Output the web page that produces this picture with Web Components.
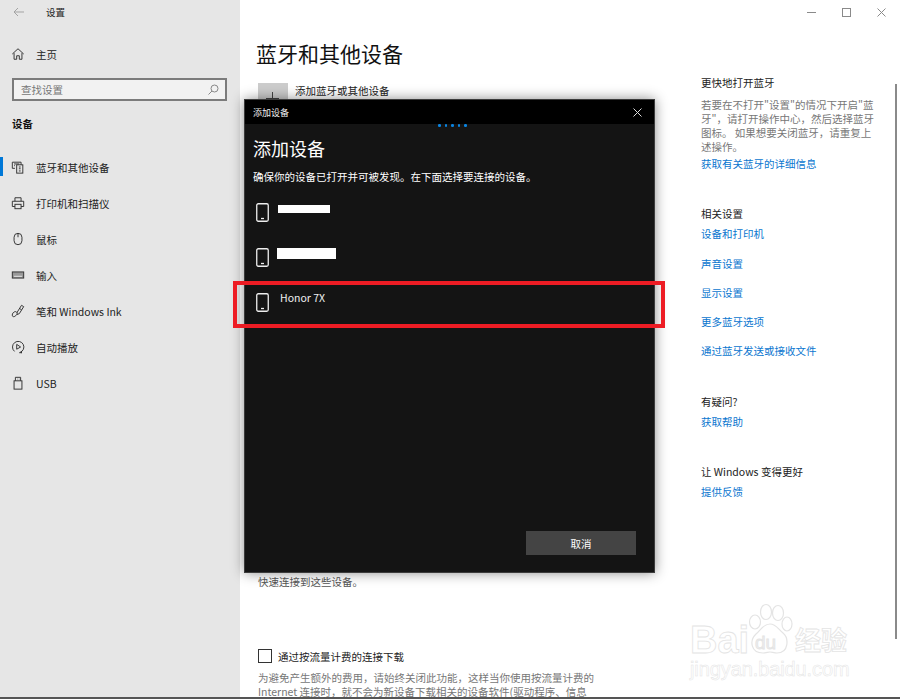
<!DOCTYPE html>
<html lang="zh-CN">
<head>
  <meta charset="UTF-8">
  <title>设置</title>
  <style>
    html, body { margin: 0; height: 100%; background: #fff; }
    body { font: 10.5px "Noto Sans CJK SC", "Liberation Sans", sans-serif; color: #1a1a1a; }
    svg { display: block; }
  </style>
</head>
<body>
  <settings-window>
    <settings-sidebar slot="sidebar">
      <nav-item svg="home" slot="home">主页</nav-item>
      <nav-item svg="bluetooth" active>蓝牙和其他设备</nav-item>
      <nav-item svg="printer">打印机和扫描仪</nav-item>
      <nav-item svg="mouse">鼠标</nav-item>
      <nav-item svg="keyboard">输入</nav-item>
      <nav-item svg="pen">笔和 Windows Ink</nav-item>
      <nav-item svg="play">自动播放</nav-item>
      <nav-item svg="usb">USB</nav-item>
    </settings-sidebar>

    <settings-main slot="main"></settings-main>

    <settings-aside slot="aside">
      <aside-group heading="更快地打开蓝牙" style="--gap:7px">
        <p-text>若要在不打开"设置"的情况下开启"蓝<br>牙"，请打开操作中心，然后选择蓝牙<br>图标。 如果想要关闭蓝牙，请重复上<br>述操作。</p-text>
        <a-link style="margin-top:2px">获取有关蓝牙的详细信息</a-link>
      </aside-group>
      <aside-group heading="相关设置" style="margin-top:21px">
        <a-link>设备和打印机</a-link>
        <a-link>声音设置</a-link>
        <a-link>显示设置</a-link>
        <a-link>更多蓝牙选项</a-link>
        <a-link>通过蓝牙发送或接收文件</a-link>
      </aside-group>
      <aside-group heading="有疑问?" style="margin-top:21px">
        <a-link>获取帮助</a-link>
      </aside-group>
      <aside-group heading="让 Windows 变得更好" style="margin-top:21px">
        <a-link>提供反馈</a-link>
      </aside-group>
    </settings-aside>

    <add-device-dialog slot="overlay">
      <device-row><span class="bar" slot="bar" style="--w:52px;--h:8px;--x:-2px;--y:4px"></span></device-row>
      <device-row><span class="bar" slot="bar" style="--w:59px;--h:11px;--x:-3px;--y:2px"></span></device-row>
      <device-row>Honor 7X</device-row>
    </add-device-dialog>
    <red-mark slot="overlay"></red-mark>
    <baidu-mark slot="overlay"></baidu-mark>
  </settings-window>

  <script>
    const ICONS = {
      home: '<path d="M1.5 8 8 2l6.5 6M3.5 7v7h3v-4h3v4h3V7" />',
      bluetooth: '<path d="M1.5 2.5h10v3M1.5 2.5v7h3M3.5 4.5h6M3.5 6.5h1" /><rect x="6.5" y="5.5" width="7" height="9.5" /><path d="M9 8h2M9 10h2M9 12.5h2" />',
      printer: '<path d="M4.5 6V2h7v4M4.5 12h-3V6h13v6h-3" /><rect x="4.5" y="9.5" width="7" height="5" />',
      mouse: '<rect x="3.5" y="1.5" width="9" height="13" rx="4.5" /><path d="M8 1.5V6" />',
      keyboard: '<rect x="1.5" y="4.5" width="13" height="7" fill="#999" /><path d="M3.5 9.5h9" stroke="#e6e6e6" />',
      pen: '<path d="M7 9.5 12 1.5 14.5 3l-5 8-2.500 1z" /><path d="M9.500 5 12 6.500" /><path d="M7 10c-1-2-3-1.500-4.500 0S1 14.500 3 14.500s3-2 4-3" />',
      play: '<path d="M4 13A6.500 6.500 0 1 1 10 14.300" /><path d="M6.500 5v5.500L11 8zM9.500 14.500h3M12 12.500V15" />',
      usb: '<rect x="3.500" y="5.500" width="9" height="9.500" /><path d="M5 5.500v-4h6v4M7 3.500h.5M9 3.500h.5" />'
    }

    // small helper, every element just gets an open shadow root from a string
    function shadow(el, html) {
      el.attachShadow({ mode: 'open' }).innerHTML = html
    }

    customElements.define('settings-window', class extends HTMLElement {
      constructor() {
        super()
        shadow(this, `
          <style>
            :host { display: block; position: relative; width: 900px; height: 699px; overflow: hidden; background: #fff; }
            #frame { display: flex; height: 697px; border-bottom: 2px solid #555; overflow: hidden; }
          </style>
          <div id="frame">
            <slot name="sidebar"></slot>
            <slot name="main"></slot>
            <slot name="aside"></slot>
          </div>
          <slot name="overlay"></slot>
        `)
      }
    })

    customElements.define('settings-sidebar', class extends HTMLElement {
      constructor() {
        super()
        shadow(this, `
          <style>
            :host { display: block; flex: none; box-sizing: border-box; width: 240px; background: #e6e6e6; color: #222; }
            #top { display: flex; align-items: center; height: 24px; padding-left: 13px; }
            #top span { margin-left: 22px; font-size: 9.5px; }
            #home { display: block; margin-top: 12px; }
            #search { display: flex; align-items: center; justify-content: space-between; box-sizing: border-box; height: 23px; margin: 6px 13px 0 12px; padding: 0 6px 0 7px; border: 2px solid #7b7b7b; background: #f2f2f2; color: #777; }
            h4 { margin: 11px 0 0 12px; height: 24px; line-height: 24px; font-size: 10.5px; font-weight: 700; color: #111; }
            #list { margin-top: 13px; }
          </style>
          <div id="top">
            <svg width="11" height="10" viewBox="0 0 11 10" fill="none" stroke="#a3a3a3"><path d="M11 5H1M5 1 1 5l4 4" /></svg>
            <span>设置</span>
          </div>
          <div id="home"><slot name="home"></slot></div>
          <div id="search">
            <span>查找设置</span>
            <svg width="11" height="11" viewBox="0 0 11 11" fill="none" stroke="#888"><circle cx="6.5" cy="4.5" r="3.500" /><path d="M4 7 .5 10.500" /></svg>
          </div>
          <h4>设备</h4>
          <div id="list"><slot></slot></div>
        `)
      }
    })

    customElements.define('nav-item', class extends HTMLElement {
      constructor() {
        super()
        shadow(this, `
          <style>
            :host { display: flex; align-items: center; position: relative; height: 36px; padding-left: 11px; }
            svg { display: block; width: 14px; height: 14px; margin-right: 11px; fill: none; stroke: #333; stroke-width: 1.1; }
            #mark { display: none; position: absolute; left: 0; top: 8px; width: 3px; height: 19px; background: #0078d7; }
            :host([active]) #mark { display: block; }
          </style>
          <i id="mark"></i>
          <svg viewBox="0 0 16 16">${ICONS[this.getAttribute('svg')]}</svg>
          <slot></slot>
        `)
      }
    })

    customElements.define('settings-main', class extends HTMLElement {
      constructor() {
        super()
        shadow(this, `
          <style>
            :host { display: block; flex: none; box-sizing: border-box; width: 461px; padding-left: 18px; }
            h1 { margin: 35px 0 0 -2px; height: 36px; line-height: 36px; font-size: 21px; font-weight: 400; color: #111; }
            #add { display: flex; gap: 7px; margin-top: 12px; height: 30px; }
            #plus { display: block; width: 30px; height: 30px; background: #ccc; }
            #add span { line-height: 15px; color: #222; }
            #note { margin-top: 461px; line-height: 16px; color: #555; }
            #check { display: flex; align-items: center; gap: 6px; margin-top: 59px; height: 14px; color: #222; }
            #box { box-sizing: border-box; width: 14px; height: 14px; border: 1.5px solid #333; }
            #more { margin-top: 8px; width: 345px; line-height: 14px; color: #777; }
          </style>
          <h1>蓝牙和其他设备</h1>
          <div id="add">
            <svg id="plus" viewBox="0 0 30 30" fill="none" stroke="#444"><path d="M14.500 9v13M8 15.500h13" /></svg>
            <span>添加蓝牙或其他设备</span>
          </div>
          <div id="note">快速连接到这些设备。</div>
          <div id="check"><div id="box"></div>通过按流量计费的连接下载</div>
          <div id="more">为避免产生额外的费用，请始终关闭此功能，这样当你使用按流量计费的 Internet 连接时，就不会为新设备下载相关的设备软件(驱动程序、信息</div>
        `)
      }
    })

    customElements.define('settings-aside', class extends HTMLElement {
      constructor() {
        super()
        shadow(this, `
          <style>
            :host { display: block; flex: 1; position: relative; }
            #controls { display: flex; justify-content: flex-end; align-items: center; gap: 26px; height: 24px; padding-right: 14px; }
            #controls svg { fill: none; stroke: #8a8a8a; }
            #body { width: 180px; margin-top: 51px; }
            #bar { position: absolute; right: 3px; top: 84px; width: 2px; height: 555px; background: #8a8a8a; }
          </style>
          <div id="controls">
            <svg width="9" height="9" viewBox="0 0 9 9"><path d="M0 4.5h9" /></svg>
            <svg width="9" height="9" viewBox="0 0 9 9"><rect x=".5" y=".5" width="8" height="8" /></svg>
            <svg width="9" height="9" viewBox="0 0 9 9"><path d="M.5 .5l8 8M8.500 .5l-8 8" /></svg>
          </div>
          <div id="body"><slot></slot></div>
          <i id="bar"></i>
        `)
      }
    })

    customElements.define('aside-group', class extends HTMLElement {
      constructor() {
        super()
        shadow(this, `
          <style>
            :host { display: block; }
            h5 { margin: 0 0 var(--gap, 4px); height: 16px; line-height: 16px; font-size: 10.5px; font-weight: 400; color: #222; }
          </style>
          <h5>${this.getAttribute('heading')}</h5>
          <slot></slot>
        `)
      }
    })

    customElements.define('p-text', class extends HTMLElement {
      constructor() {
        super()
        shadow(this, `
          <style>:host { display: block; line-height: 14px; color: #777; white-space: nowrap; }</style>
          <slot></slot>
        `)
      }
    })

    customElements.define('a-link', class extends HTMLElement {
      constructor() {
        super()
        shadow(this, `
          <style>:host { display: block; height: 29.3px; line-height: 16px; color: #0a76cf; }</style>
          <slot></slot>
        `)
      }
    })

    customElements.define('add-device-dialog', class extends HTMLElement {
      constructor() {
        super()
        shadow(this, `
          <style>
            :host { display: flex; flex-direction: column; position: absolute; left: 244px; top: 99px; box-sizing: border-box; width: 411px; height: 474px; background: #141414; color: #f2f2f2; box-shadow: 0 0 12px rgba(0, 0, 0, .45); border: 1px solid #3c3c3c; }
            #title { display: flex; align-items: center; justify-content: space-between; flex: none; height: 24px; padding: 0 12px 0 8px; background: #000; font-size: 9px; }
            #title svg { fill: none; stroke: #ddd; }
            #dots { display: flex; justify-content: center; gap: 4px; height: 3px; padding-left: 6px; }
            #dots i { width: 2.5px; height: 2.5px; border-radius: 50%; background: #0a84e0; }
            h2 { margin: 8px 0 0 8px; height: 27px; line-height: 27px; font-size: 18px; font-weight: 400; color: #fff; }
            p { margin: 7px 0 18px 8px; line-height: 16px; color: #fff; }
            #foot { margin-top: auto; display: flex; justify-content: flex-end; padding: 0 18px 17px 0; }
            button { width: 110px; height: 24px; border: 0; padding: 0; background: #444; color: #fff; font: inherit; }
          </style>
          <div id="title">添加设备
            <svg width="9" height="9" viewBox="0 0 9 9"><path d="M.5 .5l8 8M8.500 .5l-8 8" /></svg>
          </div>
          <div id="dots"><i></i><i></i><i></i><i></i><i></i></div>
          <h2>添加设备</h2>
          <p>确保你的设备已打开并可被发现。在下面选择要连接的设备。</p>
          <slot></slot>
          <div id="foot"><button>取消</button></div>
        `)
      }
    })

    customElements.define('device-row', class extends HTMLElement {
      constructor() {
        super()
        shadow(this, `
          <style>
            :host { display: flex; align-items: flex-start; gap: 11px; height: 45px; padding-left: 11px; color: #f0f0f0; }
            svg { flex: none; fill: none; stroke: #eee; }
            #label { line-height: 14px; margin-top: -2px; }
            ::slotted(.bar) { display: block; width: var(--w); height: var(--h); margin: var(--y) 0 0 var(--x); background: #fff; }
          </style>
          <svg width="13" height="19" viewBox="0 0 13 19"><rect x=".75" y=".75" width="11.5" height="17.5" rx="1.5" stroke-width="1.3" /><path d="M5 15.5h3" stroke-width="1.3" /></svg>
          <div id="label"><slot name="bar"></slot><slot></slot></div>
        `)
      }
    })

    customElements.define('red-mark', class extends HTMLElement {
      constructor() {
        super()
        shadow(this, `
          <style>:host { display: block; position: absolute; left: 233px; top: 281px; box-sizing: border-box; width: 432px; height: 47px; border: 4px solid #ed1c24; }</style>
        `)
      }
    })

    // the baidu jingyan watermark, real text with an outline and no fill
    customElements.define('baidu-mark', class extends HTMLElement {
      constructor() {
        super()
        shadow(this, `
          <style>
            :host { display: block; position: absolute; left: 690px; top: 600px; width: 170px; height: 84px; color: #fff; font-family: "Liberation Sans", sans-serif; -webkit-text-stroke: .8px #e4e4e4; }
            span { position: absolute; white-space: nowrap; }
            svg { position: absolute; left: 55px; top: 2px; fill: #fff; stroke: #e4e4e4; stroke-width: 1.2; }
            #bai { left: 0; top: 20px; font-size: 38px; font-weight: 700; line-height: 40px; }
            #du { left: 65px; top: 32px; font-size: 19px; line-height: 22px; color: #eee; }
            #cn { left: 105px; top: 24px; font: 700 26px/30px "Noto Sans CJK SC", sans-serif; }
            #url { left: 0; top: 58px; font-size: 20px; line-height: 22px; letter-spacing: -.1px; -webkit-text-stroke-width: .5px; }
          </style>
          <span id="bai">Bai</span>
          <svg width="50" height="56" viewBox="0 0 50 56">
            <ellipse cx="10" cy="20" rx="5.5" ry="7" />
            <ellipse cx="21" cy="10" rx="5.5" ry="7.5" />
            <ellipse cx="33" cy="11" rx="5.5" ry="7.5" />
            <ellipse cx="42" cy="22" rx="5" ry="7" />
            <path d="M25 22c6 0 8 5 13 9 6 5 6 20-6 20-3 0-5-1-7-1s-4 1-7 1c-12 0-14-12-7-19 5-4 7-10 14-10z" />
          </svg>
          <span id="du">du</span>
          <span id="cn">经验</span>
          <span id="url">jingyan.baidu.com</span>
        `)
      }
    })
  </script>
</body>
</html>
